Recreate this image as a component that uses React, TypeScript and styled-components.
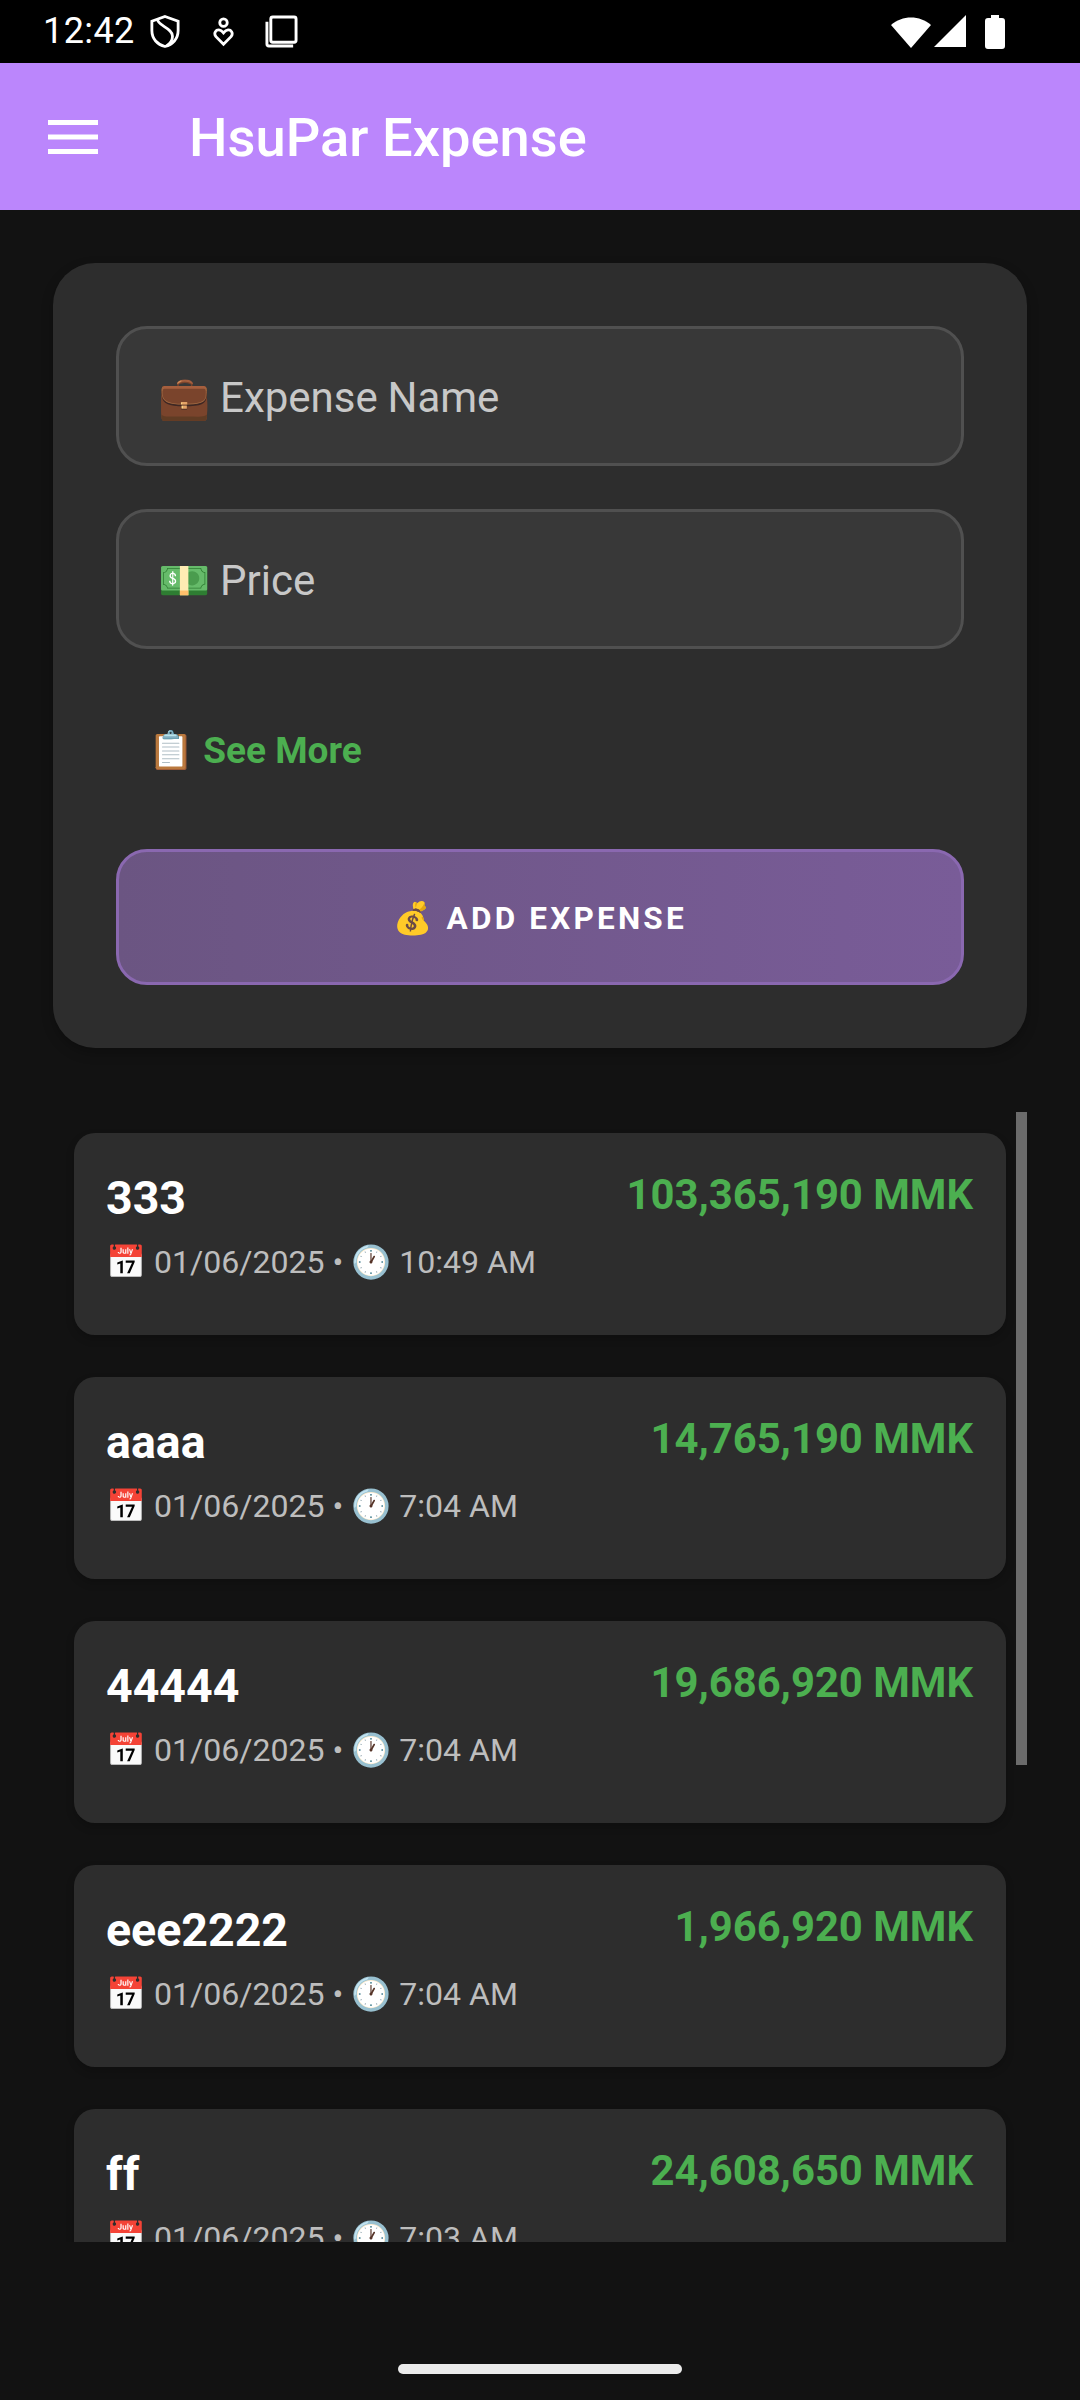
import React from 'react';
import styled, { createGlobalStyle } from 'styled-components';

const GlobalStyle = createGlobalStyle`
  html, body {
    margin: 0;
    padding: 0;
    background: #121212;
  }
  * {
    box-sizing: border-box;
  }
`;

const Screen = styled.div`
  width: 1080px;
  height: 2400px;
  overflow: hidden;
  display: flex;
  flex-direction: column;
  background: #121212;
  font-family: Roboto, 'Noto Color Emoji', sans-serif;
`;

const StatusBar = styled.div`
  height: 63px;
  background: #000;
  display: flex;
  align-items: center;
  justify-content: space-between;
  padding: 0 75px 0 43px;
  color: #fff;
`;

const StatusGroup = styled.div`
  display: flex;
  align-items: center;
`;

const StatusIcon = styled.svg<{ $gap: number }>`
  display: block;
  margin-left: ${({ $gap }) => $gap}px;
`;

const Clock = styled.span`
  font-size: 36px;
  line-height: 63px;
  letter-spacing: 0.4px;
`;

const AppBar = styled.header`
  height: 147px;
  background: #bb86fc;
  display: flex;
  align-items: center;
  padding: 0 48px;
  gap: 91px;
`;

const Title = styled.h1`
  margin: 0;
  padding-top: 2px;
  color: #fff;
  font-size: 54.3px;
  font-weight: 500;
`;

const FormCard = styled.section`
  margin: 53px 53px 0;
  height: 785px;
  padding: 63px 63px 0;
  border-radius: 42px;
  background: #2d2d2d;
  box-shadow: 0 5px 12px rgba(0, 0, 0, 0.25);
`;

const Field = styled.div`
  height: 140px;
  margin-bottom: 43px;
  padding: 3px 0 0 39px;
  display: flex;
  align-items: center;
  border: 3px solid #505050;
  border-radius: 31px;
  background: #383838;
  color: #c8c8c8;
  font-size: 42px;
  word-spacing: -0.7px;
`;

const SeeMore = styled.div`
  height: 157px;
  padding: 0 0 41px 32px;
  display: flex;
  align-items: center;
  color: #4caf50;
  font-size: 37px;
  font-weight: 700;
`;

const AddButton = styled.button`
  display: block;
  width: 100%;
  height: 136px;
  padding: 3px 0 0;
  border: 3px solid #8a68b0;
  border-radius: 31px;
  background: linear-gradient(90deg, #6b5582, #795c98);
  color: #fff;
  font-family: inherit;
  font-size: 31.5px;
  font-weight: 700;
  letter-spacing: 3.2px;
`;

const ListViewport = styled.div`
  position: relative;
  height: 1130px;
  margin-top: 64px;
  overflow: hidden;
  padding: 21px 74px 0 74px;
`;

const ScrollThumb = styled.div`
  position: absolute;
  top: 0;
  left: 1016px;
  width: 11px;
  height: 653px;
  background: #6b6b6b;
`;

const ExpenseCard = styled.article`
  height: 202px;
  margin-bottom: 42px;
  padding: 34px 33px 32px 32px;
  display: flex;
  justify-content: space-between;
  border-radius: 21px;
  background: #2d2d2d;
  box-shadow: 0 4px 8px rgba(0, 0, 0, 0.2);
`;

const ExpenseName = styled.div`
  color: #fff;
  font-size: 46.5px;
  font-weight: 700;
  line-height: 62px;
`;

const ExpenseMeta = styled.div`
  margin-top: 12px;
  color: #bdbdbd;
  font-size: 32.1px;
  line-height: 42px;
`;

const ExpenseAmount = styled.div`
  color: #4caf50;
  font-size: 41.8px;
  font-weight: 700;
  line-height: 56px;
`;

const BottomArea = styled.div`
  flex: 1;
  display: flex;
  justify-content: center;
  padding-top: 122px;
`;

const HomeIndicator = styled.div`
  width: 284px;
  height: 10px;
  border-radius: 5px;
  background: #ebebeb;
`;

const expenses = [
  { name: '333', time: '10:49 AM', amount: '103,365,190 MMK' },
  { name: 'aaaa', time: '7:04 AM', amount: '14,765,190 MMK' },
  { name: '44444', time: '7:04 AM', amount: '19,686,920 MMK' },
  { name: 'eee2222', time: '7:04 AM', amount: '1,966,920 MMK' },
  { name: 'ff', time: '7:03 AM', amount: '24,608,650 MMK' },
];

export default function App(): JSX.Element {
  return (
    <Screen>
      <GlobalStyle />
      <StatusBar>
        <StatusGroup>
          <Clock>12:42</Clock>
          <StatusIcon $gap={15} width="30" height="35" viewBox="0 0 32 36" fill="none" stroke="#fff" strokeWidth="3">
            <path d="M16 2 L30 7 V17 C30 26 24 32 16 34 C8 32 2 26 2 17 V7 Z" />
            <path d="M8 5 C8 12 24 14 24 23 C24 27 21 31 18 33" />
          </StatusIcon>
          <StatusIcon $gap={33} width="21" height="30" viewBox="0 0 22 32" fill="none" stroke="#fff" strokeWidth="3">
            <circle cx="11" cy="6" r="4" />
            <path d="M11 29 L3 21 C0 17 3 13 7 14 C9 14 10 16 11 17 C12 16 13 14 15 14 C19 13 22 17 19 21 Z" />
          </StatusIcon>
          <StatusIcon $gap={31} width="33" height="33" viewBox="0 0 34 34" fill="none" stroke="#fff" strokeWidth="3">
            <rect x="6" y="2" width="26" height="26" rx="2" />
            <path d="M2 7 V30 a2 2 0 0 0 2 2 H29" />
          </StatusIcon>
        </StatusGroup>
        <StatusGroup>
          <StatusIcon $gap={0} width="40" height="34" viewBox="0 0 40 34" fill="#fff">
            <path d="M0 10 C11 0 29 0 40 10 L20 33 Z" />
          </StatusIcon>
          <StatusIcon $gap={3} width="32" height="33" viewBox="0 0 32 33" fill="#fff">
            <path d="M0 32 L32 0 V32 Z" />
          </StatusIcon>
          <StatusIcon $gap={19} width="20" height="34" viewBox="0 0 20 34" fill="#fff">
            <path d="M6 0 H14 V3 H17 a3 3 0 0 1 3 3 V31 a3 3 0 0 1 -3 3 H3 a3 3 0 0 1 -3 -3 V6 a3 3 0 0 1 3 -3 H6 Z" />
          </StatusIcon>
        </StatusGroup>
      </StatusBar>
      <AppBar>
        <svg width="50" height="34" viewBox="0 0 50 34" fill="#fff">
          <rect y="0" width="50" height="5" />
          <rect y="14.5" width="50" height="5" />
          <rect y="29" width="50" height="5" />
        </svg>
        <Title>HsuPar Expense</Title>
      </AppBar>
      <FormCard>
        <Field>💼 Expense Name</Field>
        <Field>💵 Price</Field>
        <SeeMore>📋 See More</SeeMore>
        <AddButton>💰 ADD EXPENSE</AddButton>
      </FormCard>
      <ListViewport>
        <ScrollThumb />
        {expenses.map((e) => (
          <ExpenseCard key={e.name}>
            <div>
              <ExpenseName>{e.name}</ExpenseName>
              <ExpenseMeta>📅 01/06/2025 • 🕐 {e.time}</ExpenseMeta>
            </div>
            <ExpenseAmount>{e.amount}</ExpenseAmount>
          </ExpenseCard>
        ))}
      </ListViewport>
      <BottomArea>
        <HomeIndicator />
      </BottomArea>
    </Screen>
  );
}
